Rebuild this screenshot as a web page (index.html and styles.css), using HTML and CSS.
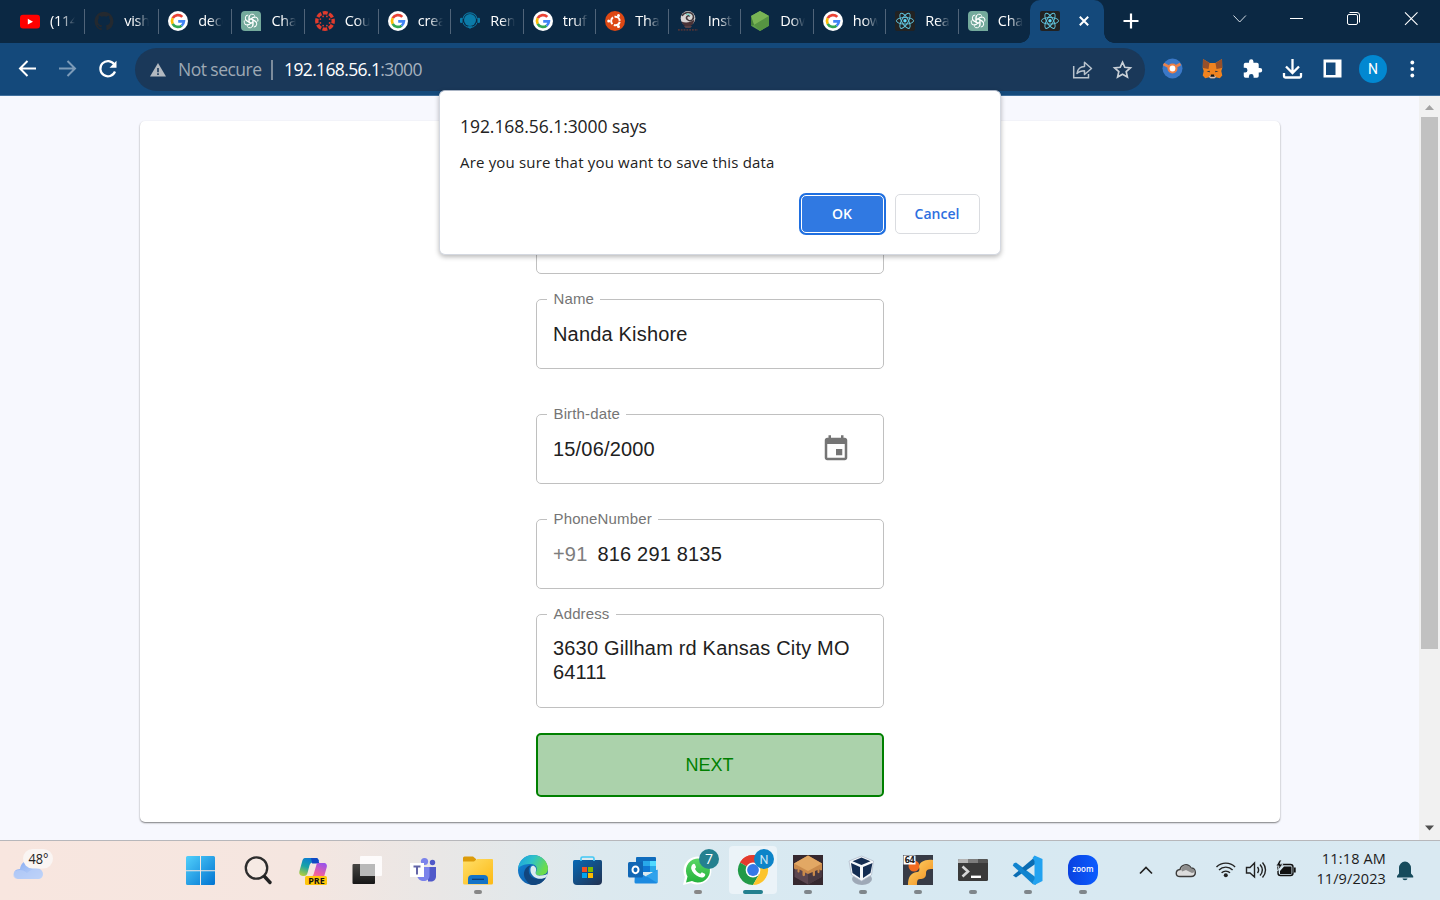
FILE: index.html
```html
<!DOCTYPE html>
<html lang="en">
<head>
<meta charset="utf-8">
<title>192.168.56.1:3000</title>
<link rel="stylesheet" href="styles.css">
</head>
<body>
<svg class="defs" width="0" height="0" aria-hidden="true">
  <defs>
    <linearGradient id="gWin" x1="0" y1="0" x2="1" y2="1"><stop offset="0" stop-color="#52d0fb"/><stop offset="1" stop-color="#0073d1"/></linearGradient>
    <linearGradient id="gCloud" x1="0" y1="0" x2="1" y2="1"><stop offset="0" stop-color="#83a9f2"/><stop offset="1" stop-color="#cbdcfa"/></linearGradient>
    <linearGradient id="gCopA" x1="0.6" y1="0" x2="0.2" y2="1"><stop offset="0" stop-color="#0a78d6"/><stop offset=".5" stop-color="#19a3a6"/><stop offset="1" stop-color="#b5cf3a"/></linearGradient>
    <linearGradient id="gCopB" x1="0.7" y1="0" x2="0.3" y2="1"><stop offset="0" stop-color="#9a54ea"/><stop offset=".6" stop-color="#ef5fa2"/><stop offset="1" stop-color="#fb8f76"/></linearGradient>
    <linearGradient id="gTvA" x1="0" y1="0" x2="0" y2="1"><stop offset="0" stop-color="#474643"/><stop offset="1" stop-color="#171717"/></linearGradient>
    <linearGradient id="gFolder" x1="0" y1="0" x2="1" y2="1"><stop offset="0" stop-color="#ffdf69"/><stop offset="1" stop-color="#fdb913"/></linearGradient>
    <linearGradient id="gEdgeA" x1="0" y1="0" x2="1" y2=".4"><stop offset="0" stop-color="#1b9de2"/><stop offset=".5" stop-color="#2fc2c8"/><stop offset="1" stop-color="#6bdc4b"/></linearGradient>
    <linearGradient id="gEdgeB" x1="0" y1="0" x2="1" y2="1"><stop offset="0" stop-color="#1389dc"/><stop offset="1" stop-color="#0d4a93"/></linearGradient>
    <linearGradient id="gStore" x1="0" y1="0" x2="1" y2="1"><stop offset="0" stop-color="#0869b5"/><stop offset="1" stop-color="#213150"/></linearGradient>
    <linearGradient id="gWa" x1="0" y1="0" x2="0" y2="1"><stop offset="0" stop-color="#5bd666"/><stop offset="1" stop-color="#25b33c"/></linearGradient>
    <linearGradient id="gOr" x1="0" y1="0" x2="1" y2="1"><stop offset="0" stop-color="#ffd76a"/><stop offset="1" stop-color="#f08a1c"/></linearGradient>
    <linearGradient id="gZoom" x1="0" y1="0" x2="1" y2="0"><stop offset="0" stop-color="#0a42e0"/><stop offset="1" stop-color="#0b5cff"/></linearGradient>
    <symbol id="google" viewBox="0 0 20 20">
      <circle cx="10" cy="10" r="10" fill="#fff"/>
      <g fill="none" stroke-width="2.7">
        <path d="M14.3 5.9A6 6 0 0 0 4.7 7.2" stroke="#ea4335"/>
        <path d="M4.7 7.2a6 6 0 0 0 0 5.6" stroke="#fbbc05"/>
        <path d="M4.7 12.8a6 6 0 0 0 8.9 1.9" stroke="#34a853"/>
        <path d="M13.6 14.7a6 6 0 0 0 2.3-4.4H10.2" stroke="#4285f4"/>
      </g>
    </symbol>
    <symbol id="openai" viewBox="0 0 20 20">
      <path d="M4 0h12a4 4 0 0 1 4 4v16H4a4 4 0 0 1-4-4V4a4 4 0 0 1 4-4z" fill="#74aa9c"/>
      <g fill="none" stroke="#fff" stroke-width="1" stroke-linejoin="round">
        <path id="petal" d="M8.1 11.1V6.2a3.1 3.1 0 0 1 5.7-1.6M8.1 8.8l4.2-2.4a3 3 0 0 1 1.7-.4"/>
        <use href="#petal" transform="rotate(60 10 10)"/><use href="#petal" transform="rotate(120 10 10)"/>
        <use href="#petal" transform="rotate(180 10 10)"/><use href="#petal" transform="rotate(240 10 10)"/>
        <use href="#petal" transform="rotate(300 10 10)"/>
      </g>
    </symbol>
    <symbol id="react" viewBox="0 0 20 20">
      <rect width="20" height="20" rx="2" fill="#222"/>
      <g fill="none" stroke="#61c5de" stroke-width=".95">
        <ellipse cx="10" cy="9.8" rx="8.6" ry="3.3"/>
        <ellipse cx="10" cy="9.8" rx="8.6" ry="3.3" transform="rotate(60 10 9.8)"/>
        <ellipse cx="10" cy="9.8" rx="8.6" ry="3.3" transform="rotate(120 10 9.8)"/>
      </g>
      <circle cx="10" cy="9.8" r="1.7" fill="#61dafb"/>
    </symbol>
  </defs>
</svg>

<div class="screen">
  <header class="tabstrip">
    <div class="tabs">
      <div class="tab"><svg class="fav" viewBox="0 0 20 20"><rect y="3.8" width="20" height="13.6" rx="3" fill="#f00"/><path d="M7.8 7.8l5.2 2.9-5.2 2.9z" fill="#fff"/></svg><span class="tab-title">(114</span></div>
      <div class="tab"><svg class="fav" viewBox="0 0 24 24"><path fill="#24292f" d="M12 1C5.7 1 .7 6 .7 12.3c0 5 3.200 9.200 7.700 10.700.6.1.8-.2.8-.5v-2c-3.200.7-3.800-1.400-3.800-1.400-.5-1.300-1.300-1.700-1.300-1.700-1-.7.1-.7.1-.7 1.100.1 1.700 1.200 1.700 1.200 1 1.700 2.700 1.200 3.300.9.1-.7.4-1.200.7-1.500-2.500-.3-5.200-1.300-5.200-5.600 0-1.200.4-2.200 1.200-3-.1-.3-.5-1.500.1-3 0 0 1-.3 3.100 1.100a10.800 10.800 0 0 1 5.700 0C17 5.400 18 5.700 18 5.700c.6 1.500.2 2.700.1 3 .7.800 1.200 1.800 1.200 3 0 4.300-2.700 5.300-5.200 5.600.4.3.8 1 .8 2.100v3.100c0 .3.2.6.8.5a11.300 11.300 0 0 0 7.600-10.700C23.300 6 18.300 1 12 1z"/></svg><span class="tab-title">vish</span></div>
      <div class="tab"><svg class="fav"><use href="#google"/></svg><span class="tab-title">deco</span></div>
      <div class="tab"><svg class="fav"><use href="#openai"/></svg><span class="tab-title">Cha</span></div>
      <div class="tab"><svg class="fav" viewBox="0 0 20 20"><circle cx="10" cy="10" r="8.200" fill="none" stroke="#e13b2d" stroke-width="3.400" stroke-dasharray="4.900 1.540" stroke-dashoffset="2.450"/><g fill="#e13b2d"><circle cx="14.6" cy="11.900" r=".9"/><circle cx="11.900" cy="14.600" r=".9"/><circle cx="8.100" cy="14.600" r=".9"/><circle cx="5.400" cy="11.900" r=".9"/><circle cx="5.400" cy="8.100" r=".9"/><circle cx="8.100" cy="5.400" r=".9"/><circle cx="11.900" cy="5.400" r=".9"/><circle cx="14.600" cy="8.100" r=".9"/></g></svg><span class="tab-title">Cou</span></div>
      <div class="tab"><svg class="fav"><use href="#google"/></svg><span class="tab-title">crea</span></div>
      <div class="tab"><svg class="fav" viewBox="0 0 20 20"><circle cx="10" cy="9" r="6" fill="#0b7ba8"/><path d="M2.800 8a7.300 7.300 0 0 1 14.400 0" fill="none" stroke="#0b7ba8" stroke-width="1.100"/><rect x="0" y="6.800" width="2.600" height="5.200" rx="1.200" fill="#0b7ba8"/><rect x="17.400" y="6.800" width="2.600" height="5.200" rx="1.200" fill="#0b7ba8"/><path d="M3 11.500a7.400 7.400 0 0 0 14 0" fill="none" stroke="#0b7ba8"/><path d="M7.200 15.200h5.600L10 18z" fill="#0b7ba8"/></svg><span class="tab-title">Ren</span></div>
      <div class="tab"><svg class="fav"><use href="#google"/></svg><span class="tab-title">truf</span></div>
      <div class="tab"><svg class="fav" viewBox="0 0 20 20"><circle cx="10" cy="10" r="10" fill="#dd4814"/><circle cx="10.400" cy="10" r="4.300" fill="none" stroke="#fff" stroke-width="2" stroke-dasharray="7.400 1.600" stroke-dashoffset="-.8"/><circle cx="3.700" cy="10" r="1.500" fill="#fff"/><circle cx="13.500" cy="4.400" r="1.500" fill="#fff"/><circle cx="13.500" cy="15.600" r="1.500" fill="#fff"/></svg><span class="tab-title">Tha</span></div>
      <div class="tab"><svg class="fav" viewBox="0 0 20 20"><circle cx="10" cy="7.400" r="7.300" fill="#d8d4d3"/><path d="M3.500 10.500c4 2 9 1 13-2-.5 4.500-3.500 7-7 7-3 0-5-2-6-5z" fill="#4a3236"/><path d="M4 5c2-4 9-5 11-1s-2 7-5 5-1-5 2-4" fill="none" stroke="#40363a" stroke-width="1.500"/><path d="M8 3.500c2-1 4 0 4 1.500" fill="none" stroke="#4fd8c4"/><path d="M6 15h8l-1.500 2h-5z" fill="#5a4246"/><path d="M0 18.900h20" stroke="#4c3338" stroke-width="1.600" stroke-dasharray="1.800 1"/></svg><span class="tab-title">Inst</span></div>
      <div class="tab"><svg class="fav" viewBox="0 0 20 20"><path d="M10 0l9 5v9.700L10 20l-9-5.300V5z" fill="#5fa04e"/><path d="M1 5l3 9 15-9-9-5z" fill="#79b455"/><path d="M4 14l15-9v9.700L10 20z" fill="#569442"/><path d="M1 5l3 9-3 .7z" fill="#468139"/></svg><span class="tab-title">Dow</span></div>
      <div class="tab"><svg class="fav"><use href="#google"/></svg><span class="tab-title">how</span></div>
      <div class="tab"><svg class="fav"><use href="#react"/></svg><span class="tab-title">Rea</span></div>
      <div class="tab last"><svg class="fav"><use href="#openai"/></svg><span class="tab-title">Cha</span></div>
      <div class="tab active"><svg class="fav"><use href="#react"/></svg><svg class="tab-close" viewBox="0 0 10 10"><path d="M.8.8l8.400 8.400M9.200.8L.8 9.200" stroke="#fff" stroke-width="2"/></svg></div>
    </div>
    <svg class="newtab" viewBox="0 0 16 16"><path d="M8 .5v15M.5 8h15" stroke="#fff" stroke-width="2.200"/></svg>
    <div class="window-controls">
      <svg viewBox="1211 0 57 43"><path d="M1233.500 15.500l6.200 6.500 6.200-6.500" fill="none" stroke="#d5dde5"/></svg>
      <svg viewBox="1268 0 57 43"><path d="M1290 18.500h13" stroke="#fff"/></svg>
      <svg viewBox="1325 0 57 43"><g fill="none" stroke="#fff"><rect x="1347.500" y="14.500" width="10" height="10" rx="1.500"/><path d="M1349.500 12.500h7.500a2.500 2.500 0 0 1 2.500 2.500v7.500"/></g></svg>
      <svg viewBox="1382 0 57 43"><path d="M1405 12.300l12.500 12.500M1417.500 12.300L1405 24.800" stroke="#fff" stroke-width="1.100"/></svg>
    </div>
  </header>

  <nav class="toolbar">
    <svg class="navicons" viewBox="0 43 135 52">
      <g fill="none" stroke-width="2">
        <path d="M36 68.500H20.500M27.500 61l-7.500 7.500 7.500 7.500" stroke="#fff"/>
        <path d="M59 68.500h15.500M67.500 61l7.500 7.500-7.500 7.500" stroke="#7d9bb8"/>
        <path d="M114.300 64.500a7.600 7.600 0 1 0 .7 7" stroke="#fff" stroke-width="2.200"/>
      </g>
      <path d="M116.500 60.800v7h-7z" fill="#fff"/>
    </svg>
    <div class="omnibox">
      <svg class="warn" viewBox="0 0 16 14"><path d="M8 0l8 13.600H0z" fill="#b3b9c0"/><path d="M8 5v4.300M8 10.300v1.700" stroke="#1a3859" stroke-width="1.600"/></svg>
      <span class="notsecure">Not secure</span>
      <span class="divider"></span>
      <span class="url">192.168.56.1<span class="port">:3000</span></span>
      <svg class="omni-end" viewBox="1062 48 83 43"><g fill="none" stroke="#b9c3cd" stroke-width="1.500"><path d="M1073.700 66v11.700h14.800V74"/><path d="M1077 73.500c.8-5 3.800-7 7.500-7v-4.200l7 6.200-7 6v-3.800c-3.500 0-5.500.5-7.500 2.800z" stroke-linejoin="round"/><path d="M1122.500 62.200l2.300 5.100 5.600.6-4.200 3.700 1.200 5.500-4.900-2.900-4.900 2.900 1.200-5.500-4.200-3.700 5.600-.6z" stroke="#c9d0d7" stroke-width="1.700"/></g></svg>
    </div>
    <div class="actions">
      <svg viewBox="1152 43 40 52"><circle cx="1172.500" cy="68.500" r="10" fill="#3b78c7"/><path d="M1163.500 64l8.500 4.500 8.500-4.500" fill="none" stroke="#e9824c" stroke-width="2.800"/><circle cx="1172.500" cy="68.500" r="5" fill="#f07f44"/><circle cx="1172.500" cy="68.500" r="2.900" fill="#fff"/></svg>
      <svg viewBox="1192 43 40 52"><path d="M1203 59l6.500 4h6l6.500-4 .3 9-1 3 1 4.500-2.500 2.700-4-1-1.800 1h-3l-1.800-1-4 1-2.500-2.700 1-4.500-1-3z" fill="#f0831f"/><path d="M1203 59l6.500 4-1 6-5.500-1zM1222 59l-6.500 4 1 6 5.500-1z" fill="#97502a"/><path d="M1206.500 71.500l3-.8.500 1.600zM1218.500 71.500l-3-.8-.5 1.600z" fill="#233447"/><path d="M1209 76.500l2-1.500h3l2 1.500-1 1.800h-5z" fill="#d5bfb2"/><path d="M1211 74.500h3l.7 2.200h-4.400z" fill="#161616"/></svg>
      <svg viewBox="1152 43 40 52"><path transform="translate(1162 58.800) scale(.88)" d="M20.500 10.500H19v-4a2 2 0 0 0-2-2h-4V3a2.500 2.500 0 0 0-5 0v1.500H4a2 2 0 0 0-2 2v3.800h1.500a2.700 2.700 0 0 1 0 5.400H2v3.800a2 2 0 0 0 2 2h3.800V20a2.700 2.700 0 0 1 5.400 0v1.500H17a2 2 0 0 0 2-2v-4h1.500a2.500 2.500 0 0 0 0-5z" fill="#fff"/></svg>
      <svg viewBox="1272 43 40 52"><path d="M1292.500 59v13M1286 66.500l6.500 6.500 6.500-6.500M1284 73v3.200a1.300 1.300 0 0 0 1.300 1.300h14.400a1.300 1.300 0 0 0 1.300-1.300V73" fill="none" stroke="#fff" stroke-width="2.300"/></svg>
      <svg viewBox="1312 43 40 52"><path fill-rule="evenodd" d="M1323.500 59.500h18v18h-18zm2.500 3v12.500h9.500V62.500z" fill="#fff"/></svg>
      <div class="avatar">N</div>
      <svg viewBox="1392 43 40 52"><g fill="#fff"><circle cx="1412.300" cy="62.500" r="1.900"/><circle cx="1412.300" cy="69" r="1.900"/><circle cx="1412.300" cy="75.500" r="1.900"/></g></svg>
    </div>
  </nav>

  <main class="viewport">
    <section class="card">
      <form class="form">
        <div class="field hidden-top"></div>
        <fieldset class="field name"><legend>Name</legend><span class="value">Nanda Kishore</span></fieldset>
        <fieldset class="field birth"><legend>Birth-date</legend><span class="value">15/06/2000</span><svg class="calendar" viewBox="0 0 24 24"><path d="M17 12h-5v5h5v-5zM16 1v2H8V1H6v2H5c-1.110 0-1.990.9-1.990 2L3 19c0 1.100.89 2 2 2h14c1.100 0 2-.9 2-2V5c0-1.100-.9-2-2-2h-1V1h-2zm3 18H5V8h14v11z" fill="#757575"/></svg></fieldset>
        <fieldset class="field phone"><legend>PhoneNumber</legend><span class="prefix">+91</span><span class="value">816 291 8135</span></fieldset>
        <fieldset class="field address"><legend>Address</legend><span class="value">3630 Gillham rd Kansas City MO 64111</span></fieldset>
        <button type="button" class="next">NEXT</button>
      </form>
    </section>
    <div class="scrollbar">
      <svg viewBox="0 0 21 21"><path d="M6 14h9l-4.500-5z" fill="#a3a3a3"/></svg>
      <div class="thumb"></div>
      <svg viewBox="0 0 21 21"><path d="M6 6.500h9l-4.500 5z" fill="#505050"/></svg>
    </div>
  </main>

  <footer class="taskbar">
    <svg class="weather" viewBox="0 840 60 60">
      <path d="M18 879a5 5 0 0 1-1-9.500c2-1 3-.5 3-.5 1-6 5-9 9-8 5 1 7 4 7 7 4 0 7 3 7 6s-2 5-5 5z" fill="url(#gCloud)"/>
      <path d="M15 871c5-2 9-1 12 2 4-4 9-5 14-3 2 3 3 8-3 9H18c-5 0-6-5-3-8z" fill="#b9cff8" opacity=".7"/>
      <rect x="23" y="849" width="30" height="19.500" rx="9.700" fill="#faf5f3"/>
      <text x="28.500" y="864" class="t-temp" textLength="20" lengthAdjust="spacingAndGlyphs">48°</text>
    </svg>
    <div class="apps">
      <svg viewBox="176 840 55 60"><g fill="url(#gWin)"><path d="M186 857.500a1.500 1.500 0 0 1 1.500-1.500H200v14.200h-14zM201 856h12.500a1.500 1.500 0 0 1 1.500 1.500v12.700h-14zM186 871.200h14V885h-12.500a1.500 1.500 0 0 1-1.500-1.500zM201 871.200h14v12.300a1.500 1.500 0 0 1-1.500 1.500H201z"/></g></svg>
      <svg viewBox="231 840 55 60"><circle cx="256.500" cy="868" r="10.700" fill="#f6ece8" fill-opacity=".55" stroke="#2d2d2d" stroke-width="2.300"/><path d="M264.500 876.500l5.500 6" stroke="#222" stroke-width="3.400" stroke-linecap="round"/></svg>
      <svg viewBox="286 840 55 60"><path d="M305 858h11c2 0 2.500 1.500 3 3l-6 1.500c-2 0-3 1-3.500 3l-2 7.500c-.5 2-1.500 3-3.500 3-3 0-5.500-1-4.500-5l2.500-9c.6-2.500 1.500-4 3-4z" fill="url(#gCopA)"/><path d="M311 858h5c2 0 2.500 1.500 3.200 5.500h-7z" fill="#1049c4"/><path d="M317.500 863h6c3 0 4 2 3 5l-2.500 9c-.7 2.500-2 4-4 4h-7c-2 0-2.800-1-3.300-4 2.500 0 3.300-1 4-3l2.500-8.500c.3-1 .6-2 1.300-2.500z" fill="url(#gCopB)"/><rect x="305" y="876" width="22" height="9" rx="1.500" fill="#ffc60b"/><text x="308.200" y="884" class="t-pre" textLength="16.500" lengthAdjust="spacingAndGlyphs">PRE</text></svg>
      <svg viewBox="341 840 55 60"><rect x="352.500" y="864" width="22.500" height="20" rx="1" fill="url(#gTvA)"/><rect x="360" y="856" width="22" height="20" rx="1" fill="#fff" fill-opacity=".84"/><path d="M360 864h15v12h-15z" fill="#b9b9b9"/></svg>
      <svg viewBox="396 840 55 60"><circle cx="424.500" cy="861.500" r="3.600" fill="#7b83eb"/><circle cx="432.500" cy="862.500" r="2.700" fill="#5059c9"/><path d="M428 867h8v9.500c0 3-2.500 5-5 5h-3z" fill="#5059c9"/><path d="M416 867h13.500v8.500c0 4-3 5.500-5.500 5.500-4 0-6-2-7-5z" fill="#7b83eb"/><rect x="410" y="863" width="14" height="14" fill="#fff"/><path d="M413.500 866.500h7M417 866.500v8" stroke="#6264a7" stroke-width="2"/></svg>
      <svg viewBox="451 840 55 60"><path d="M463 858a1.500 1.500 0 0 1 1.500-1.500h8.500l3 2.500v5h-13z" fill="#dc9b0a"/><path d="M463 861.500h11l3-2.500h15a1 1 0 0 1 1 1V883a1.500 1.500 0 0 1-1.500 1.500h-27a1.500 1.500 0 0 1-1.500-1.500z" fill="url(#gFolder)"/><path d="M468 884v-5a4 4 0 0 1 4-4h12a4 4 0 0 1 4 4v5z" fill="#1373c7"/><path d="M472 879.300h12" stroke="#0a3c75" stroke-width="1.200"/><rect x="474" y="890" width="8" height="4" rx="2" fill="#878787"/></svg>
      <svg viewBox="506 840 55 60"><circle cx="533" cy="870" r="15" fill="url(#gEdgeB)"/><path d="M518 869c1-9 7-14 15-14 9 0 15 7 15 13.500 0 5-4 7-8 7-5 0-5-2-4-3.500 2-4 0-8-5-8s-11 1-13 5z" fill="url(#gEdgeA)"/><path d="M526 880c-5-7 0-14 5-15-4 4-3 13 6 14 5 .6 8-2 9-1.500-3 5-7 7.500-13 7.500-3 0-5-2-7-5z" fill="#12467e"/><path d="M531 867c2-3 6 0 5 4-1.500 4 2 5 5 4.600 3-.2 5-.6 6.500-2-.3 1.600-.6 2.500-1 3.500-3 2-8 2.500-11.500.4-4-2.500-5.500-7-4-10.500z" fill="#dcebf0"/></svg>
      <svg viewBox="561 840 55 60"><path d="M573 861.500a1.500 1.500 0 0 1 1.500-1.500h26a1.500 1.500 0 0 1 1.500 1.500V881a4 4 0 0 1-4 4h-21a4 4 0 0 1-4-4z" fill="url(#gStore)"/><path d="M581 861v-2.500a1.500 1.500 0 0 1 1.500-1.500h10a1.500 1.500 0 0 1 1.500 1.500v2.500" fill="none" stroke="#42c8f5" stroke-width="1.600"/><path d="M582 867h5v5h-5z" fill="#f25022"/><path d="M588 867h5v5h-5z" fill="#7fba00"/><path d="M582 873h5v5h-5z" fill="#00a4ef"/><path d="M588 873h5v5h-5z" fill="#ffb900"/></svg>
      <svg viewBox="616 840 55 60"><rect x="636" y="857" width="20" height="14" rx="1" fill="#0f6cbd"/><path d="M643 861h7v5h-7z" fill="#28a8ea"/><path d="M650 861h6v5h-6z" fill="#50d9ff"/><path d="M643 866h7v6h-7z" fill="#0f78d4"/><path d="M650 866h6v6h-6z" fill="#28a8ea"/><path d="M635 870l11 6.500 11.500-7V882a1.500 1.500 0 0 1-1.500 1.500h-20a1.500 1.500 0 0 1-1.500-1.500z" fill="#1c8ae0"/><path d="M646 876l11.500 7V870z" fill="#2fa2ec"/><rect x="628" y="862" width="15" height="15.500" rx="1.500" fill="#1066b5"/><ellipse cx="635.500" cy="869.800" rx="3" ry="3.400" fill="none" stroke="#fff" stroke-width="2"/></svg>
      <svg viewBox="671 840 55 60"><path d="M683 885l2-8a14 14 0 1 1 6 6z" fill="#fff"/><path d="M686 882.500l1.500-6a12 12 0 1 1 4.500 4.500z" fill="url(#gWa)"/><path d="M692.500 864.500c1-1 2-.8 2.500 0l1 2.500c.3.700-1 1.500-1 2 1 2.200 3 4 5.200 4.700.6 0 1.300-1.600 2-1.300l2.600 1.300c.7.500.5 1.500 0 2.300-1.200 1.700-3.500 1.800-5.500 1-4-1.500-7-4.500-8-8-.3-1.500 0-3.200 1.200-4.500z" fill="#fff"/><circle cx="709" cy="859" r="10" fill="#24808f"/><text x="709" y="864.200" class="t-badge">7</text><rect x="694" y="890" width="8" height="4" rx="2" fill="#878787"/></svg>
      <svg viewBox="726 840 55 60"><rect x="729" y="846" width="48" height="48" rx="4" fill="#ebf3f8"/><circle cx="753" cy="870" r="15" fill="#fff"/><path d="M753 870L740 862.500A15 15 0 0 1 766 862.500z" fill="#e33b2e"/><path d="M740 862.500a15 15 0 0 0 13 22.500l6.500-11.300L753 870z" fill="#219a48"/><path d="M766 862.500a15 15 0 0 1-13 22.500l6.500-11.300L759 863z" fill="#fcc42c"/><path d="M739.900 862.600A15 15 0 0 1 766 862.500h-13z" fill="#e33b2e"/><circle cx="753" cy="870" r="7.400" fill="#fff"/><circle cx="753" cy="870" r="5.900" fill="#3478e8"/><circle cx="764" cy="859" r="10" fill="#0d84c8"/><text x="764" y="863.700" class="t-n">N</text><rect x="743" y="890" width="20" height="4" rx="2" fill="#24808f"/></svg>
      <svg viewBox="781 840 55 60"><path d="M793 855h30v30h-30z" fill="#35282f"/><path d="M794.500 864l13.500 7 13.500-7v13L808 884.500 794.500 877z" fill="#5c4750"/><path d="M808 871v13.500L821.500 877v-13z" fill="#483941"/><path d="M808 855.500l14 8v6.500c-1 1-2.500 0-2.500-1v3c0 1.500-2 1.500-2 0v-2l-2.500 1v4c0 1.500-2.300 1.500-2.300 0v-3l-4.700 2-3-1.500v2.500c0 1.500-2.500 1.500-2.500 0V871l-3-1.500v2c0 1.300-2 1.300-2 0V869c-1.500 1-3.500 0-3.500-1v-4.500z" fill="#c98a4b"/><path d="M808 855.500l14 8-14 7.500-14-7.500z" fill="#e2a864"/></svg>
      <svg viewBox="836 840 55 60"><ellipse cx="862" cy="879" rx="10" ry="6" fill="#9ea9b7"/><path d="M861.500 856l12 5-2 14-10 6-10-6-2.500-14z" fill="#f5f8fb" stroke="#b3bdcb" stroke-width=".8"/><path d="M861.500 857.500l9 3.700-9 3.800-9-3.800zM851 863l9 4v11l-7.500-5zM872.500 863l-9.500 4v11l7.500-5z" fill="#142d52"/></svg>
      <svg viewBox="891 840 55 60"><path d="M903 855h30v30h-30z" fill="#373b46"/><circle cx="914" cy="866" r="5.500" fill="#f36b20"/><path d="M933 860v9c-6 0-7 1-7 5s-3 5-6 5-3 3-3 6h-9c0-7 2-12 9-13 2 0 3-2 2-5 0-5 6-8 14-7z" fill="url(#gOr)"/><rect x="903.500" y="855.500" width="12" height="9" fill="#fff"/><text x="904.500" y="863" class="t-64">64</text></svg>
      <svg viewBox="946 840 55 60"><rect x="958" y="859" width="30" height="22" rx="1.500" fill="#3a3a3a"/><path d="M958 863v-2.500a1.500 1.500 0 0 1 1.500-1.500H968v4z" fill="#b4b4b4"/><path d="M968 859h10v4h-10z" fill="#7d7d7d"/><path d="M978 859h8.500a1.500 1.500 0 0 1 1.500 1.500v2.500h-10z" fill="#555"/><path d="M962.500 866.500l5.500 5-5.500 5" fill="none" stroke="#d6d6d6" stroke-width="2.600"/><path d="M971 876.800h10" stroke="#fff" stroke-width="2.400"/></svg>
      <svg viewBox="1001 840 55 60"><path d="M1013 864l3-1.500 20 15V885z" fill="#1184cf"/><path d="M1013 875.500l3 2 20-14V856z" fill="#0a6cb3"/><path d="M1012.700 865.500l2.300-2.800 20 16-1.500 6z" fill="#1184cf"/><path d="M1034.500 855.500l8 3.500v22l-8 4-2-2.500 2-3.500v-18l-2-3z" fill="#22a2f0"/></svg>
      <svg viewBox="1056 840 55 60"><rect x="1068" y="855" width="30" height="30" rx="12" fill="url(#gZoom)"/><text x="1083" y="872" class="t-zoom" textLength="21" lengthAdjust="spacingAndGlyphs">zoom</text></svg>
    </div>
    <div class="tray">
      <svg class="trayicons" viewBox="1130 840 174 60">
        <path d="M1140 873.500l6-6 6 6" fill="none" stroke="#222" stroke-width="1.700"/>
        <path d="M1180 876.500c-5 0-5-6.500 0-7 1-5 8-7 11-1.500 5 0 6.500 8.500 0 8.500z" fill="#ddd" stroke="#3c3c3c" stroke-width="1.400"/>
        <path d="M1181 869c2-5 8-5 10-.5 2 0 4 1.500 4 3.500l-3 1-6-3-4 1.500z" fill="#8e8e8e"/>
        <g fill="none" stroke="#222" stroke-width="1.400"><path d="M1216.500 867a13 13 0 0 1 18.600 0M1219 870a9.500 9.500 0 0 1 13.600 0M1221.600 872.800a6 6 0 0 1 8.400 0"/><path d="M1246.500 867.500h3.500l4.500-4.500v14l-4.500-4h-3.500zM1257.500 867c1.500 2 1.500 4 0 6M1260 864.500c3 3.500 3 7.500 0 11M1262.500 862.500c4 4.500 4 10.500 0 15"/></g>
        <circle cx="1225.800" cy="875.300" r="2" fill="#222"/>
        <rect x="1278" y="864.500" width="15" height="11" rx="2.500" fill="none" stroke="#111" stroke-width="1.400"/><path d="M1280 871l4-4.500h7.500v7.500H1280zM1294 867.500h1.700v5h-1.700z" fill="#111"/><path d="M1279.500 860l-3.500 6h3l-1.500 5 5.500-7h-3l1.500-4z" fill="#111" stroke="#d9e9f1" stroke-width=".8"/>
      </svg>
      <div class="clock"><span class="time">11:18 AM</span><span class="date">11/9/2023</span></div>
      <svg class="bell" viewBox="1395 840 45 60"><path d="M1397 877.500v-1.500l2-2.500v-5.500a6 6.500 0 0 1 12 0v5.500l2.200 2.500v1.500z" fill="#174b5c"/><path d="M1402.500 878.500h5a2.500 1.800 0 0 1-5 0z" fill="#174b5c"/></svg>
    </div>
  </footer>

  <div class="dialog" role="dialog">
    <div class="dlg-title"><span>192.168.56.1:3000 says</span></div>
    <div class="dlg-text"><span>Are you sure that you want to save this data</span></div>
    <div class="dlg-actions"><button type="button" class="ok">OK</button><button type="button" class="cancel">Cancel</button></div>
  </div>
  <div class="dots"><i></i><i></i><i></i><i></i><i></i><i></i></div>
</div>
</body>
</html>
```

FILE: styles.css
```css
* { box-sizing: border-box; }
body { margin: 0; font-family: "Open Sans", "Noto Sans", sans-serif; }
svg { display: block; flex: none; }
.defs { position: absolute; }
.screen { position: relative; width: 1440px; height: 900px; overflow: hidden; display: flex; flex-direction: column; background: #f7f8fe; }

/* Tab strip */
.tabstrip { height: 43px; flex: none; background: #0b2843; display: flex; }
.tabs { display: grid; grid-template-columns: 73px 74px repeat(3, 73.200px) repeat(8, 72.500px) 71.400px 74px; margin-left: 12px; flex: none; }
.tab { display: flex; align-items: center; gap: 10px; padding: 0 0 1px 9.300px; background: linear-gradient(#506479, #506479) right 9px / 1px 25px no-repeat; }
.tab:first-child { padding-left: 8px; }
.tab.last { background: none; }
.fav { width: 20px; height: 20px; }
.tab-title { width: 25px; overflow: hidden; white-space: nowrap; color: #fff; font-size: 14.500px; letter-spacing: -.3px; line-height: 22px; -webkit-mask-image: linear-gradient(90deg, #000 45%, transparent 100%); mask-image: linear-gradient(90deg, #000 45%, transparent 100%); }
.tab.active { position: relative; background: #14497b; border-radius: 10px 10px 0 0; gap: 19px; padding-left: 10px; }
.tab.active::before, .tab.active::after { content: ""; position: absolute; bottom: 0; width: 10px; height: 10px; }
.tab.active::before { right: 100%; background: radial-gradient(circle at 0 0, transparent 9.500px, #14497b 10px); }
.tab.active::after { left: 100%; background: radial-gradient(circle at 100% 0, transparent 9.500px, #14497b 10px); }
.tab-close { width: 10px; height: 10px; }
.newtab { width: 16px; height: 16px; margin: 13px 0 0 18.900px; }
.window-controls { margin: 0 1px 0 auto; display: flex; }
.window-controls svg { width: 57px; height: 43px; }

/* Toolbar */
.toolbar { height: 53px; flex: none; background: #14497b; border-bottom: 1px solid #40709d; display: flex; }
.navicons { width: 135px; height: 52px; }
.omnibox { width: 1010px; height: 43px; margin-top: 5px; border-radius: 22px; background: #1a3859; display: flex; align-items: center; font-size: 17.500px; white-space: nowrap; }
.warn { width: 16px; height: 14px; margin-left: 15px; }
.notsecure { width: 84px; margin-left: 12px; padding-bottom: 2px; color: #9da8b4; letter-spacing: -.53px; }
.divider { width: 2px; height: 20px; margin: 0 11px 0 9px; background: #7d8c9c; }
.url { padding-bottom: 2px; color: #fff; letter-spacing: -.63px; }
.port { color: #a6b2bf; }
.omni-end { width: 83px; height: 43px; margin-left: auto; }
.actions { margin-left: 7px; display: flex; }
.actions svg { width: 40px; height: 52px; }
.avatar { width: 28px; height: 28px; margin: 12px 5px 0 7px; border-radius: 50%; background: #0288d1; color: #fff; font: 14px/29px Roboto, sans-serif; text-align: center; }

/* Page */
.viewport { height: 744px; flex: none; display: flex; justify-content: space-between; }
.card { width: 1140px; height: 701px; margin: 25px 0 0 140px; background: #fff; border-radius: 5px; box-shadow: 0 1px 2px rgba(0,0,0,.4), 0 1px 1px rgba(0,0,0,.14); }
.form { width: 348px; margin-left: 396px; display: flex; flex-direction: column; font-family: "Liberation Sans", Arial, sans-serif; }
.field { margin: 0; min-width: 0; border: 1px solid #c0c0c0; border-radius: 5px; height: 70px; padding: 0 16px; color: #212121; font-size: 20px; letter-spacing: .18px; line-height: 24px; display: flex; }
fieldset.field { height: 78px; }
.hidden-top { margin-top: 83px; }
.field legend { height: 16px; margin-left: -6px; padding: 0 6px 0 6.500px; font-size: 15px; line-height: 16px; letter-spacing: .14px; color: #757575; }
.field .value, .field .prefix { margin-top: 15px; }
.name { margin-top: 17px; }
.birth { margin-top: 37px; }
.calendar { width: 30px; height: 30px; margin: 12px 16px 0 auto; }
.phone { margin-top: 27px; }
.prefix { color: #7d7d7d; margin-right: 10px; }
fieldset.address { height: 102px; margin-top: 17px; }
.address .value { margin-top: 14px; }
.next { height: 64px; margin-top: 25px; padding: 0 1px 0 0; border: 2px solid #008000; border-radius: 5px; background: #abd2ab; color: #008000; font: 18px "Liberation Sans", Arial, sans-serif; }
.scrollbar { width: 21px; height: 744px; background: #f1f1f1; display: flex; flex-direction: column; }
.scrollbar svg { width: 21px; height: 21px; }
.thumb { width: 17px; height: 532px; margin: 0 2px 170px; background: #c1c1c1; }

/* Taskbar */
.taskbar { height: 60px; flex: none; border-top: 1px solid #b7b7bb; background: linear-gradient(90deg, #f8e6df 0, #f5e6e0 300px, #e9e7e6 440px, #dce9ef 600px, #d7e9f2 850px, #d9e9f2 100%); display: flex; }
.taskbar svg { height: 60px; margin-top: -1px; }
.weather { width: 60px; }
.apps { margin-left: 116px; display: flex; }
.apps svg { width: 55px; }
.tray { margin-left: 19px; display: flex; }
.trayicons { width: 174px; }
.clock { width: 82px; margin: 8px 9px 0 0; display: flex; flex-direction: column; align-items: flex-end; font-size: 14.500px; line-height: 20px; color: #1c1c1c; white-space: nowrap; }
.time { letter-spacing: .15px; }
.date { letter-spacing: .1px; }
.bell { width: 45px; }
.dots { position: absolute; left: 804px; top: 890px; display: flex; gap: 47px; }
.dots i { width: 8px; height: 4px; border-radius: 2px; background: #7f868b; }
.t-temp { font: 14px "Open Sans", sans-serif; fill: #222; }
.t-pre { font: bold 8.500px "Open Sans", sans-serif; fill: #111; }
.t-badge { font: 14px "Open Sans", sans-serif; fill: #fff; text-anchor: middle; }
.t-n { font: 12.500px Roboto, sans-serif; fill: #c9e4f4; text-anchor: middle; }
.t-64 { font: bold 8px "DejaVu Sans", sans-serif; fill: #222; letter-spacing: -.6px; }
.t-zoom { font: 600 8px "Open Sans", sans-serif; fill: #fff; text-anchor: middle; }

/* Confirmation dialog */
.dialog { position: absolute; left: 439px; top: 90px; width: 562px; height: 165px; padding: 0 20px; border: 1px solid #d4d8e0; border-top-color: #aab4c4; border-radius: 6px; background: #fff; box-shadow: 0 2px 5px rgba(0,0,0,.28); color: #222; white-space: nowrap; }
.dlg-title { margin-top: 22px; font-size: 17.500px; line-height: 26px; letter-spacing: -.06px; }
.dlg-text { margin-top: 11px; font-size: 15px; line-height: 24px; letter-spacing: .18px; }
.dlg-actions { margin-top: 20px; display: flex; justify-content: flex-end; gap: 10px; }
.dlg-actions button { width: 85px; height: 40px; padding: 0 1px 2px 0; border-radius: 5px; font: 600 14px "Open Sans", sans-serif; }
.dlg-actions .ok { width: 83px; height: 38px; margin: 1px; padding-bottom: 1px; border: 1px solid #fff; background: #3079e2; color: #fff; box-shadow: 0 0 0 2px #1f6fe0; }
.cancel { border: 1px solid #dadce0; background: #fff; color: #2d6fe0; }
```
